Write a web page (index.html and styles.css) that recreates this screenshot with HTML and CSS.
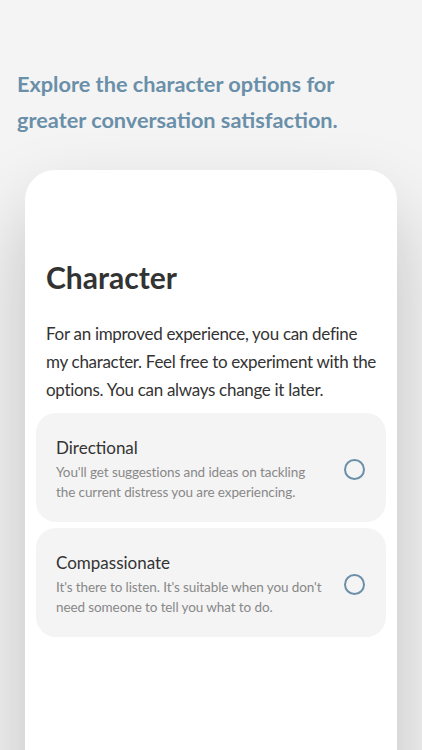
FILE: index.html
```html
<!DOCTYPE html>
<html lang="en">
<head>
    <meta charset="UTF-8">
    <meta name="viewport" content="width=device-width, initial-scale=1.0">
    <title>Character</title>
    <link rel="stylesheet" href="styles.css">
</head>
<body>
    <h2 class="intro">Explore the character options for greater conversation satisfaction.</h2>

    <div class="sheet">
        <h1 class="sheet-title">Character</h1>
        <p class="sheet-text">For an improved experience, you can define my character. Feel free to experiment with the options. You can always change it later.</p>

        <div class="option">
            <div class="option-text">
                <div class="option-name">Directional</div>
                <div class="option-desc">You'll get suggestions and ideas on tackling the current distress you are experiencing.</div>
            </div>
            <span class="radio"></span>
        </div>

        <div class="option">
            <div class="option-text">
                <div class="option-name">Compassionate</div>
                <div class="option-desc">It's there to listen. It's suitable when you don't need someone to tell you what to do.</div>
            </div>
            <span class="radio"></span>
        </div>
    </div>
</body>
</html>
```

FILE: styles.css
```css
body {
    font-family: 'Lato', 'Liberation Sans', sans-serif;
    margin: 0;
    padding: 0;
    background: #f4f4f4;
    color: #333333;
    height: 750px;
    overflow: hidden;
}
.intro {
    font-size: 21.7px;
    font-weight: 700;
    line-height: 36px;
    color: #6a8fa9;
    margin: 0;
    padding: 66px 17px 0;
}
.sheet {
    margin: 32px 25px 0;
    background: #ffffff;
    border-radius: 30px 30px 0 0;
    padding: 89px 11px 0;
    height: 600px;
    box-shadow: 0 40px 80px rgba(0, 0, 0, 0.22);
}
.sheet-title {
    font-size: 30px;
    font-weight: 700;
    line-height: 36px;
    margin: 0;
    padding: 0 10px;
    color: #333333;
}
.sheet-text {
    font-size: 17px;
    letter-spacing: -0.3px;
    line-height: 28px;
    margin: 25px 0 9px;
    padding: 0 4px 0 10px;
    color: #333333;
}
.option {
    display: flex;
    align-items: center;
    justify-content: space-between;
    background: #f4f4f4;
    border-radius: 20px;
    padding: 24px 21px 20px 20px;
    margin-bottom: 6px;
}
.option-text {
    width: 270px;
}
.option-name {
    font-size: 17px;
    line-height: 22px;
    color: #333333;
    margin-bottom: 3px;
}
.option-desc {
    font-size: 13.5px;
    letter-spacing: -0.1px;
    line-height: 20px;
    color: #888888;
}
.radio {
    width: 17px;
    height: 17px;
    border: 2px solid #6a8fa9;
    border-radius: 50%;
    flex-shrink: 0;
}
```
